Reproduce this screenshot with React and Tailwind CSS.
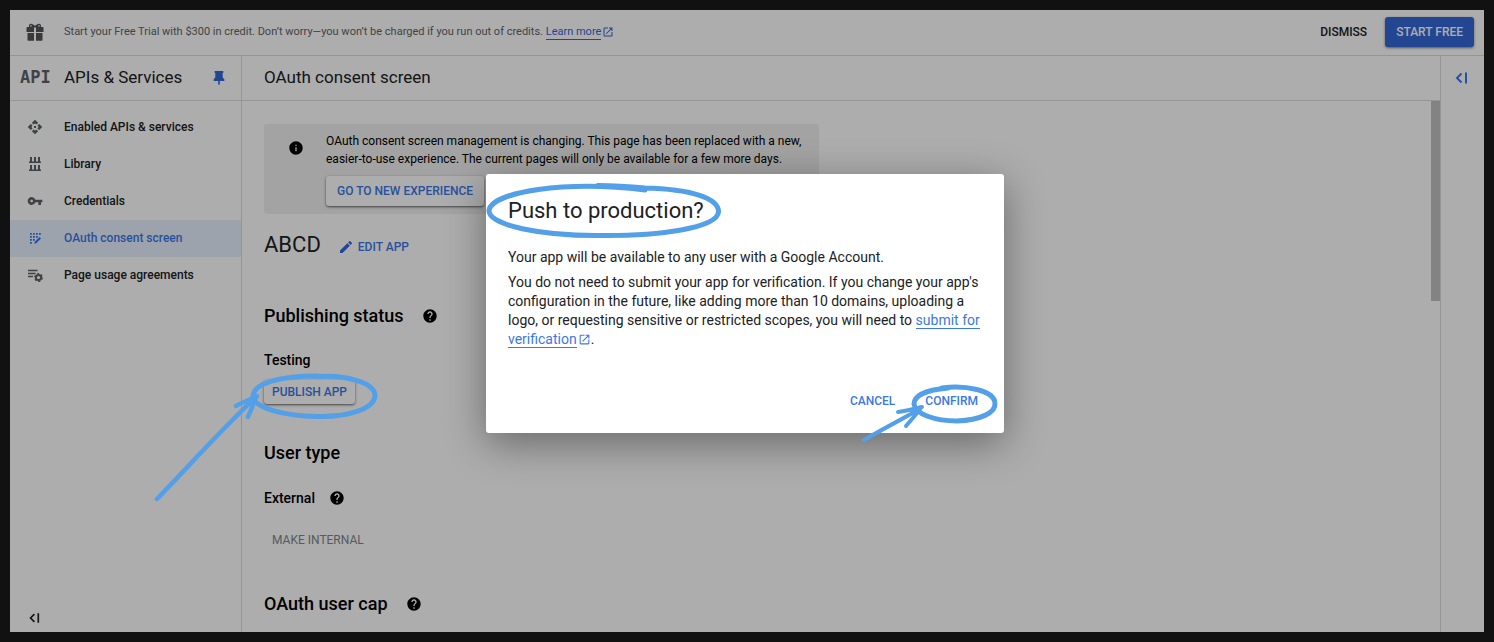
import React from "react";
import { MdVpnKey, MdInfo, MdHelp, MdEdit, MdOpenInNew } from "react-icons/md";

function GiftIcon() {
  return (
    <svg viewBox="0 0 18 18" className="size-[18px]" fill="#515457" aria-hidden="true">
      <path d="M1.500 4h1.600C2.400 2 3.600.6 5.200.7 6.800.8 8 2.300 9 2.700 10 2.300 11.200.8 12.800.7 14.400.6 15.600 2 14.900 4h1.600c.6 0 1 .4 1 1v4H10V4.500H8V9H.5V5c0-.6.4-1 1-1z" />
      <path d="M1.500 10H8v7.700H2.500c-.6 0-1-.4-1-1zM10 10h6.500v6.700c0 .6-.4 1-1 1H10z" />
      <path d="M4.200 2.200h1.500v1.200H4.200zM12.300 2.200h1.500v1.200h-1.500z" fill="#fff" />
    </svg>
  );
}

function PinIcon() {
  return (
    <svg viewBox="0 0 16 16" className="size-4" fill="currentColor" aria-hidden="true">
      <path d="M4.500 1h7c.6 0 1 .4 1 1s-.3 1-.8 1.100V7.500l1.600 1.800v1.600H8.800V14L8 15.200 7.200 14v-3.100H2.700V9.300l1.600-1.800V3.100C3.800 3 3.500 2.600 3.500 2s.4-1 1-1z" />
    </svg>
  );
}

function DiamondIcon() {
  return (
    <svg viewBox="0 0 16 16" className="size-4" fill="currentColor" aria-hidden="true">
      <path d="M8 .7l3.100 3.100-1.500 1.800L8 4.400 6.400 5.600 4.900 3.800zM8 15.300l-3.100-3.100 1.500-1.800L8 11.600l1.600-1.200 1.500 1.800zM.7 8l3.100-3.100 1.800 1.500L4.400 8l1.200 1.600-1.800 1.500zM15.300 8l-3.100 3.100-1.800-1.500L11.600 8l-1.200-1.600 1.800-1.500z" />
      <path d="M7 7h2v2H7z" />
    </svg>
  );
}

function LibraryIcon() {
  return (
    <svg viewBox="0 0 16 16" className="size-4" fill="currentColor" aria-hidden="true">
      <path d="M3 1h2v4.500h2V1h2v4.500h2V1h2v4.500h1V7H2V5.500h1zM3 9h2v4.500h2V9h2v4.500h2V9h2v4.500h1V15H2v-1.500h1z" />
    </svg>
  );
}

function ConsentIcon() {
  return (
    <svg viewBox="0 0 16 16" className="size-4" fill="currentColor" aria-hidden="true">
      <path d="M3 3h1.800v1.800H3zM6 3h1.800v1.800H6zM9 3h1.800v1.800H9zM12 3h1.800v1.800H12zM3 6h1.800v1.800H3zM6 6h1.800v1.800H6zM9 6h1.800v1.800H9zM3 9h1.800v1.800H3zM6 9h1.800v1.800H6zM3 12h1.800v1.800H3zM7.500 12l5-5L14 8.500l-5 5H7.500z" />
    </svg>
  );
}

function AgreementsIcon() {
  return (
    <svg viewBox="0 0 16 16" className="size-4" aria-hidden="true">
      <path d="M1 3.500h9.500M1 6.500h7.500M1 9.500h5" stroke="currentColor" strokeWidth="1.500" />
      <circle cx="11.500" cy="10.500" r="2.600" fill="none" stroke="currentColor" strokeWidth="2" />
      <circle cx="11.500" cy="10.500" r="3.800" fill="none" stroke="currentColor" strokeWidth="1.200" strokeDasharray="2.200 1.780" />
    </svg>
  );
}

function CollapseIcon({ className }) {
  return (
    <svg viewBox="0 0 14 14" className={className} fill="none" stroke="currentColor" strokeWidth="2" aria-hidden="true">
      <path d="M7.500 2.500L3 7l4.500 4.500M12 1.500v11" />
    </svg>
  );
}

const navItems = [
  { label: "Enabled APIs & services", icon: <DiamondIcon /> },
  { label: "Library", icon: <LibraryIcon /> },
  { label: "Credentials", icon: <MdVpnKey className="size-4" /> },
  { label: "OAuth consent screen", icon: <ConsentIcon />, active: true },
  { label: "Page usage agreements", icon: <AgreementsIcon /> },
];

function Banner() {
  return (
    <div className="flex h-[46px] shrink-0 items-center border-b border-[#dcdcdc] pr-[10px] pb-px pl-4">
      <GiftIcon />
      <p className="ml-5 text-[11px] text-[#5f6368]">
        Start your Free Trial with $300 in credit. Don’t worry—you won’t be charged if you run out of credits.{" "}
        <a href="#learn" className="inline-flex items-center text-[#3367d6]">
          <span className="border-b border-[#3367d6] leading-[14px]">Learn more</span>
          <MdOpenInNew className="ml-px size-3" />
        </a>
      </p>
      <button className="ml-auto px-3 text-[12px] font-medium text-[#202124]">DISMISS</button>
      <button className="ml-[6px] h-[30px] rounded-[3px] bg-[#3367d6] px-[11px] text-[12px] font-medium text-white shadow-sm shadow-black/40">
        START FREE
      </button>
    </div>
  );
}

function Sidebar() {
  return (
    <aside className="flex w-[232px] shrink-0 flex-col border-r border-[#dcdcdc]">
      <div className="flex h-[45px] shrink-0 items-center border-b border-[#dcdcdc] pr-[14px] pl-[10px]">
        <span className="w-11 font-['DejaVu_Sans_Mono',monospace] text-[17px] font-bold text-[#5f6368]">API</span>
        <h2 className="text-[17px] text-[#202124]">APIs &amp; Services</h2>
        <button aria-label="Unpin menu" className="ml-auto text-[#3367d6]">
          <PinIcon />
        </button>
      </div>
      <nav className="flex flex-col pt-2">
        {navItems.map((item) => (
          <a
            key={item.label}
            href="#nav"
            className={
              item.active
                ? "flex h-[37px] items-center bg-[#e8f0fe] pb-px text-[12px] font-medium text-[#3b78e7]"
                : "flex h-[37px] items-center pb-px text-[12px] font-medium text-[#202124]"
            }
          >
            <span className={item.active ? "flex w-[54px] justify-center pr-1" : "flex w-[54px] justify-center pr-1 text-[#5f6368]"}>
              {item.icon}
            </span>
            {item.label}
          </a>
        ))}
      </nav>
      <button aria-label="Collapse menu" className="mt-auto mb-2 ml-[18px] self-start text-[#202124]">
        <CollapseIcon className="size-3" />
      </button>
    </aside>
  );
}

function Help() {
  return (
    <button aria-label="Help" className="text-black">
      <MdHelp className="size-4" />
    </button>
  );
}

function Content() {
  return (
    <div className="flex min-h-0 flex-1">
      <div className="flex min-w-0 flex-1 flex-col items-start overflow-hidden px-[22px] pt-[23px] text-black">
        <section className="flex w-[555px] shrink-0 rounded-[3px] bg-[#f1f1f1] py-2">
          <MdInfo className="mt-2 ml-6 size-4 shrink-0" />
          <div className="ml-[22px]">
            <p className="text-[12px] leading-[18px] whitespace-nowrap">
              OAuth consent screen management is changing. This page has been replaced with a new,
              <br />
              easier-to-use experience. The current pages will only be available for a few more days.
            </p>
            <button className="mt-2 h-[30px] rounded-[3px] bg-white px-[11px] text-[12px] font-medium text-[#3b78e7] shadow-sm shadow-black/50">
              GO TO NEW EXPERIENCE
            </button>
          </div>
        </section>
        <div className="mt-4 flex h-7 shrink-0 items-center">
          <h2 className="text-[22px] text-[#202124]">ABCD</h2>
          <button className="mt-[6px] ml-[17px] flex items-center text-[12px] font-medium text-[#3b78e7]">
            <MdEdit className="mr-1 size-4 text-[#3367d6]" />
            EDIT APP
          </button>
        </div>
        <div className="mt-[46px] flex h-6 shrink-0 items-center gap-[18px]">
          <h3 className="text-[18px] leading-6 font-medium">Publishing status</h3>
          <Help />
        </div>
        <h4 className="mt-[22px] text-[14px] leading-5 font-medium">Testing</h4>
        <button className="mt-[10px] h-6 shrink-0 rounded-[3px] bg-white px-2 text-[12px] font-medium text-[#3b78e7] shadow-sm shadow-black/50">
          PUBLISH APP
        </button>
        <h3 className="mt-[37px] text-[18px] leading-6 font-medium">User type</h3>
        <div className="mt-[23px] flex h-5 shrink-0 items-center gap-[14px]">
          <h4 className="text-[14px] font-medium">External</h4>
          <Help />
        </div>
        <button disabled className="mt-5 h-6 shrink-0 px-2 text-[12px] text-[#80868b]">
          MAKE INTERNAL
        </button>
        <div className="mt-10 flex h-6 shrink-0 items-center gap-[18px]">
          <h3 className="text-[18px] leading-6 font-medium">OAuth user cap</h3>
          <Help />
        </div>
      </div>
      <div className="w-[9px] shrink-0">
        <div className="h-[200px] bg-[#c1c1c1]" />
      </div>
    </div>
  );
}

function Dialog() {
  return (
    <div
      role="dialog"
      aria-labelledby="dialog-title"
      className="relative flex h-[259px] w-[518px] flex-col rounded-[3px] bg-white px-[22px] pt-[22px] pb-[22px] text-[14px] leading-[19px] text-[#202124] shadow-[0_10px_40px_rgba(0,0,0,0.4)]"
    >
      <h1 id="dialog-title" className="text-[22px] leading-[30px]">Push to production?</h1>
      <p className="mt-[22px]">Your app will be available to any user with a Google Account.</p>
      <p className="mt-[6px]">
        You do not need to submit your app for verification. If you change your app's configuration in the future, like
        adding more than 10 domains, uploading a logo, or requesting sensitive or restricted scopes, you will need to{" "}
        <a href="#verify" className="text-[#3b78e7]">
          <span className="border-b border-[#3b78e7]">submit for verification</span>
          <MdOpenInNew className="ml-px inline size-[13px] align-[-2px]" />
        </a>
        .
      </p>
      <div className="mt-auto flex justify-end gap-[30px] pr-1 text-[12px] font-medium text-[#3b78e7]">
        <button>CANCEL</button>
        <button>CONFIRM</button>
      </div>
      <svg
        viewBox="486 174 518 275"
        className="pointer-events-none absolute top-0 left-0 h-[275px] w-[518px]"
        fill="none"
        stroke="#54a0e8"
        strokeWidth="5"
        strokeLinecap="round"
        aria-hidden="true"
      >
        <path d="M645 190C565 180 493 192 489 210C488 226 545 236 600 235.500C660 236 717 228 718.500 212C719 198 690 189 645 188C625 186 615 185.500 598 185.500" />
        <path d="M948 388C925 390 914 396 914 404C915 414 935 421 957 421C980 420 996 413 995 403C994 390 965 385 942 388" />
        <path d="M864 440C883 429 902 419 920 409M898 412C906 411 914 409 922 407M906 426C911 420 916 415 920 409" strokeWidth="4" />
      </svg>
    </div>
  );
}

export default function App() {
  return (
    <div className="h-screen bg-[#111] p-[10px] font-['Roboto',sans-serif]">
      <div className="relative flex h-full flex-col bg-white">
        <Banner />
        <div className="flex min-h-0 flex-1">
          <Sidebar />
          <main className="flex min-w-0 flex-1 flex-col">
            <header className="flex h-[45px] shrink-0 items-center border-b border-[#dcdcdc] px-[22px]">
              <h1 className="text-[17px] text-[#202124]">OAuth consent screen</h1>
            </header>
            <Content />
          </main>
          <div className="flex w-11 shrink-0 justify-center border-l border-[#dcdcdc] pt-[15px] pr-1">
            <button aria-label="Show panel" className="self-start text-[#3b78e7]">
              <CollapseIcon className="size-[14px]" />
            </button>
          </div>
        </div>
        <div className="absolute inset-0 flex items-start justify-center overflow-hidden bg-black/32 pt-[164px] pr-1">
          <svg
            viewBox="150 368 232 138"
            className="pointer-events-none absolute top-[358px] left-[140px] h-[138px] w-[232px]"
            fill="none"
            stroke="#54a0e8"
            strokeWidth="5"
            strokeLinecap="round"
            aria-hidden="true"
          >
            <path d="M318 376C280 376 254 383 253 396C253 408 285 416 318 416.500C348 417 375 409 375 395C374 382 345 375 318 376.500" />
            <path d="M157 499C189 466 220 431 256 397M236 406C243 402 251 399 257 396M248 417C251 410 254 403 256 397" strokeWidth="4.500" />
          </svg>
          <Dialog />
        </div>
      </div>
    </div>
  );
}
